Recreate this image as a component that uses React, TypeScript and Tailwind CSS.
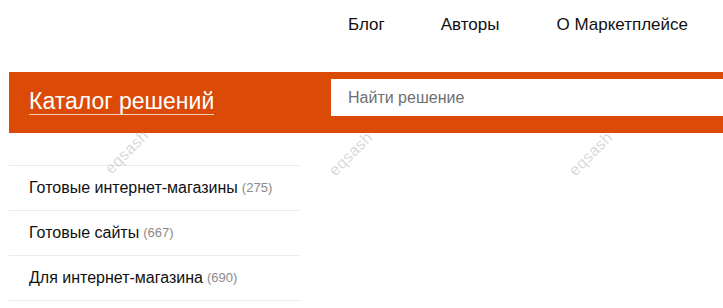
const nav = ["Блог", "Авторы", "О Маркетплейсе"];

const categories = [
  { title: "Готовые интернет-магазины", count: 275 },
  { title: "Готовые сайты", count: 667 },
  { title: "Для интернет-магазина", count: 690 },
];

function Watermark({ className }: { className: string }) {
  return (
    <span
      className={`pointer-events-none absolute -rotate-45 text-[16px] tracking-wide text-[rgba(185,185,185,0.55)] select-none ${className}`}
    >
      eqsash
    </span>
  );
}

export default function App() {
  return (
    <div className="relative h-[308px] w-[723px] overflow-hidden bg-white font-['Liberation_Sans',Arial,sans-serif] text-[#111]">
      {/* top nav */}
      <header className="flex h-[72px] items-start pl-[348px] pt-[12px] text-[17px]">
        <nav className="flex">
          {nav.map((item, i) => (
            <a
              key={item}
              href="#"
              className={i === 0 ? "mr-[56px]" : i === 1 ? "mr-[57px]" : ""}
            >
              {item}
            </a>
          ))}
        </nav>
      </header>

      {/* catalog bar */}
      <div className="ml-[9px] flex h-[61px] w-[740px] items-center bg-[#db4a06]">
        <div className="w-[322px] shrink-0 pl-[20px]">
          <h1 className="mt-[-2px] inline-block border-b border-[#f6d2bc] text-[23px] leading-[26px] text-white">
            Каталог решений
          </h1>
        </div>
        <input
          type="text"
          placeholder="Найти решение"
          className="mt-[-10px] h-[37px] flex-1 bg-white px-[17px] text-[16px] text-[#333] outline-none placeholder:text-[#707070]"
        />
      </div>

      {/* sidebar list */}
      <ul className="ml-[9px] mt-[32px] w-[291px] border-t border-[#ebebeb]">
        {categories.map((c) => (
          <li
            key={c.title}
            className="flex h-[45px] items-center border-b border-[#ebebeb] pl-[20px] text-[16px]"
          >
            {c.title}
            <span className="ml-[4px] text-[13px] text-[#8a8a8a]">({c.count})</span>
          </li>
        ))}
      </ul>

      <Watermark className="left-[100px] top-[140px]" />
      <Watermark className="left-[324px] top-[142px]" />
      <Watermark className="left-[564px] top-[142px]" />
    </div>
  );
}
